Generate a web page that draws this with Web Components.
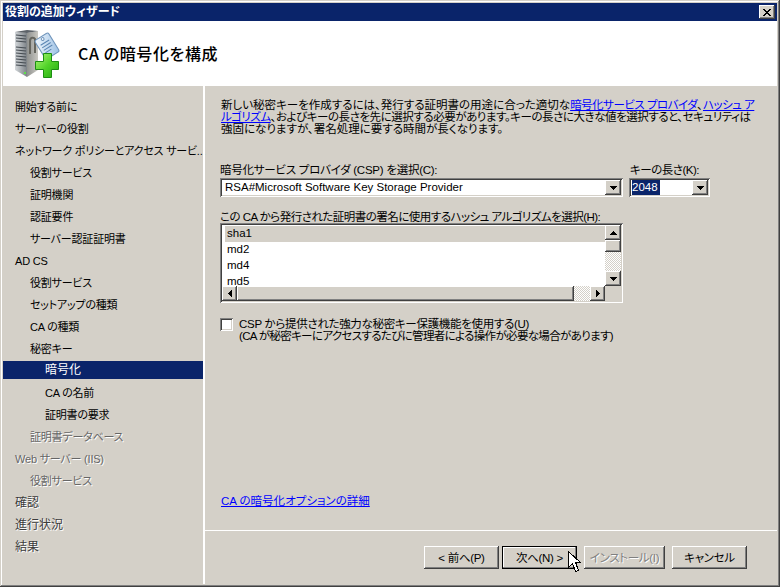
<!DOCTYPE html>
<html lang="ja">
<head>
<meta charset="utf-8">
<title>役割の追加ウィザード</title>
<style>
  html, body { margin: 0; padding: 0; background: #d4d0c8; }
  body { width: 780px; height: 587px; overflow: hidden; font: 11.5px/12px "Liberation Sans", "Noto Sans CJK JP", sans-serif; font-feature-settings: "palt"; color: #000; }
</style>
</head>
<body>
<wizard-window>
  <title-bar slot="title" text="役割の追加ウィザード"></title-bar>
  <wizard-header slot="header" text="CA の暗号化を構成"></wizard-header>
  <nav-list slot="nav">
    <nav-item>開始する前に</nav-item>
    <nav-item>サーバーの役割</nav-item>
    <nav-item>ネットワーク ポリシーとアクセス サービ...</nav-item>
    <nav-item level="1">役割サービス</nav-item>
    <nav-item level="1">証明機関</nav-item>
    <nav-item level="1">認証要件</nav-item>
    <nav-item level="1">サーバー認証証明書</nav-item>
    <nav-item>AD CS</nav-item>
    <nav-item level="1">役割サービス</nav-item>
    <nav-item level="1">セットアップの種類</nav-item>
    <nav-item level="1">CA の種類</nav-item>
    <nav-item level="1">秘密キー</nav-item>
    <nav-item level="2" selected>暗号化</nav-item>
    <nav-item level="2">CA の名前</nav-item>
    <nav-item level="2">証明書の要求</nav-item>
    <nav-item level="1" disabled>証明書データベース</nav-item>
    <nav-item disabled>Web サーバー (IIS)</nav-item>
    <nav-item level="1" disabled>役割サービス</nav-item>
    <nav-item disabled dark>確認</nav-item>
    <nav-item disabled dark>進行状況</nav-item>
    <nav-item disabled dark>結果</nav-item>
  </nav-list>
  <crypto-page slot="page"></crypto-page>
  <button-bar slot="buttons">
    <win-button>&lt; 前へ(P)</win-button>
    <win-button default>次へ(N) &gt;</win-button>
    <win-button disabled wide>インストール(I)</win-button>
    <win-button>キャンセル</win-button>
  </button-bar>
</wizard-window>

<script>
const raised = 'box-shadow: inset -1px -1px #404040, inset 1px 1px #fff, inset -2px -2px #808080;';
const sunken = 'box-shadow: inset 1px 1px #808080, inset -1px -1px #fff, inset 2px 2px #404040, inset -2px -2px #d4d0c8;';
const dither = 'background: conic-gradient(#fff 25%, #d4d0c8 0 50%, #fff 0 75%, #d4d0c8 0) 0 0 / 2px 2px;';

function arrow(dir) {
    const points = {
        up: '0,4 7,4 3.5,0',
        down: '0,0 7,0 3.5,4',
        left: '4,0 4,7 0,3.5',
        right: '0,0 0,7 4,3.5'
    };
    const vertical = dir === 'up' || dir === 'down';
    const w = vertical ? 7 : 4;
    const h = vertical ? 4 : 7;
    return `<svg width="${w}" height="${h}" viewBox="0 0 ${w} ${h}" shape-rendering="crispEdges"><polygon points="${points[dir]}" fill="#000"/></svg>`;
}

class WizardWindow extends HTMLElement {
    constructor() {
        super();
        this.attachShadow({ mode: 'open' });
        this.shadowRoot.innerHTML = `
            <style>
                :host { display: block; width: 780px; height: 587px; box-sizing: border-box; background: #d4d0c8; position: relative;
                    padding: 3px;
                    box-shadow: inset -1px -1px #404040, inset 1px 1px #d4d0c8, inset -2px -2px #808080, inset 2px 2px #fff; }
                .frame { display: grid; grid-template-columns: 200px minmax(0, 1fr); grid-template-rows: 18px 65px minmax(0, 1fr); height: 100%; }
                ::slotted([slot=title]), ::slotted([slot=header]) { grid-column: 1 / 3; }
                .right { display: flex; flex-direction: column; border-left: 2px solid #fff; min-height: 0; }
                .cursor { position: absolute; left: 568px; top: 551px; }
            </style>
            <div class="frame">
                <slot name="title"></slot>
                <slot name="header"></slot>
                <slot name="nav"></slot>
                <div class="right">
                    <slot name="page"></slot>
                    <slot name="buttons"></slot>
                </div>
            </div>
            <svg class="cursor" width="13" height="22" viewBox="0 0 13 22" shape-rendering="crispEdges">
                <path d="M0.5 0.5V16.5L4.5 12.5L7.5 20.5L10.5 19.5L7.5 11.5H12.5Z" fill="#fff" stroke="#000"/>
            </svg>`;
    }
}

class TitleBar extends HTMLElement {
    constructor() {
        super();
        this.attachShadow({ mode: 'open' });
        this.shadowRoot.innerHTML = `
            <style>
                :host { display: flex; align-items: center; justify-content: space-between; background: #0a246a; color: #fff; height: 18px; padding: 0 2px; font-size: 12px; font-weight: 700; }
                .close { width: 16px; height: 14px; background: #d4d0c8; ${raised} display: flex; align-items: center; justify-content: center; }
            </style>
            <span>${this.getAttribute('text')}</span>
            <div class="close">
                <svg width="8" height="7" viewBox="0 0 8 7" shape-rendering="crispEdges"><path d="M0 0h2v1h1v1h2v-1h1v-1h2v1h-1v1h-1v1h-1v1h1v1h1v1h1v1h-2v-1h-1v-1h-2v1h-1v1h-2v-1h1v-1h1v-1h1v-1h-1v-1h-1v-1h-1z" fill="#000"/></svg>
            </div>`;
    }
}

class WizardHeader extends HTMLElement {
    constructor() {
        super();
        this.attachShadow({ mode: 'open' });
        this.shadowRoot.innerHTML = `
            <style>
                :host { display: flex; align-items: center; gap: 17px; background: #fff; height: 65px; padding: 0 0 0 11px; }
                svg { margin-top: 1px; }
                h1 { margin: 0 0 2px; font-size: 16px; line-height: 20px; font-weight: 500; letter-spacing: 0.6px; font-family: "Noto Sans CJK JP", sans-serif; }
            </style>
            <svg width="47" height="50" viewBox="0 0 47 50">
                <defs>
                    <linearGradient id="front" x1="0" x2="1"><stop offset="0" stop-color="#d3d7da"/><stop offset="1" stop-color="#7c8287"/></linearGradient>
                    <linearGradient id="side" x1="0" x2="1"><stop offset="0" stop-color="#8f918f"/><stop offset="1" stop-color="#c9c8c2"/></linearGradient>
                    <linearGradient id="tag" x1="0" y1="0" x2="1" y2="1"><stop offset="0" stop-color="#f2f8fd"/><stop offset="1" stop-color="#9cc0e4"/></linearGradient>
                    <linearGradient id="plus" x1="0" y1="0" x2="1" y2="1"><stop offset="0" stop-color="#b4f57a"/><stop offset="0.5" stop-color="#52d42a"/><stop offset="1" stop-color="#22a810"/></linearGradient>
                </defs>
                <path d="M1 3L13 4V48L1 41Z" fill="url(#front)"/>
                <path d="M13 4L24 2V41L13 48Z" fill="url(#side)"/>
                <path d="M1 3L13 1L24 2L13 4Z" fill="#5c6268"/>
                <path d="M2 6L12 7M2 9L12 10M2 12L12 13M2 18L12 19M2 21L12 22M2 24L12 25M2 27L12 28M2 30L12 31M2 33L12 34M2 36L12 37" stroke="#454c52" stroke-width="1.2"/>
                <rect x="10" y="43" width="2" height="2" fill="#5ce04a"/>
                <path d="M16 25V12C16 8 20 8 21 10V24" fill="none" stroke="#66665f" stroke-width="2"/>
                <g transform="rotate(-32 33 17)">
                    <rect x="25" y="6" width="16" height="22" rx="2" fill="url(#tag)" stroke="#6f94bb"/>
                    <path d="M28 13H38M28 16H38M28 19H38M28 22H35" stroke="#5a85b2"/>
                    <circle cx="33" cy="8.8" r="1.4" fill="#fff" stroke="#6f94bb"/>
                </g>
                <path d="M29.5 24.5H37.5V32.5H44.5V40.5H37.5V48.5H29.5V40.5H21.5V32.5H29.5Z" fill="url(#plus)" stroke="#1c8f12"/>
            </svg>
            <h1>${this.getAttribute('text')}</h1>`;
    }
}

class NavList extends HTMLElement {
    constructor() {
        super();
        this.attachShadow({ mode: 'open' });
        this.shadowRoot.innerHTML = `
            <style>
                :host { display: flex; flex-direction: column; gap: 4px; padding-top: 11px; background: #d4d0c8; }
            </style>
            <slot></slot>`;
    }
}

class NavItem extends HTMLElement {
    constructor() {
        super();
        this.attachShadow({ mode: 'open' });
        this.shadowRoot.innerHTML = `
            <style>
                :host { display: block; height: 18px; line-height: 20px; padding-left: 12px; white-space: nowrap; font-size: 11px; letter-spacing: -0.2px; }
                :host([level="1"]) { padding-left: 27px; }
                :host([level="2"]) { padding-left: 42px; }
                :host([selected]) { background: #0a246a; color: #fff; font-size: 12px; letter-spacing: 0; line-height: 18px; }
                :host([disabled]) { color: #666; text-shadow: 1px 1px 0 #fff; }
                :host([dark]) { color: #3c3c3c; font-size: 12px; letter-spacing: 0; }
            </style>
            <slot></slot>`;
    }
}

class ComboBox extends HTMLElement {
    constructor() {
        super();
        this.attachShadow({ mode: 'open' });
        this.shadowRoot.innerHTML = `
            <style>
                :host { display: flex; align-items: center; justify-content: space-between; box-sizing: border-box; height: 19px; background: #fff; padding: 2px; ${sunken} }
                .value { padding-left: 3px; line-height: 15px; white-space: nowrap; }
                :host([highlight]) .value { background: #0a246a; color: #fff; padding: 0 2px 0 0; margin-left: 1px; }
                .btn { width: 16px; height: 15px; background: #d4d0c8; ${raised} display: flex; align-items: center; justify-content: center; }
            </style>
            <span class="value"><slot></slot></span>
            <span class="btn">${arrow('down')}</span>`;
    }
}

class ScrollBar extends HTMLElement {
    constructor() {
        super();
        this.attachShadow({ mode: 'open' });
        const vertical = this.getAttribute('orient') === 'v';
        this.shadowRoot.innerHTML = `
            <style>
                :host { display: flex; flex-direction: ${vertical ? 'column' : 'row'}; ${dither} }
                .btn { flex: none; width: ${vertical ? 16 : 15}px; height: 15px; background: #d4d0c8; ${raised} display: flex; align-items: center; justify-content: center; }
                .thumb { flex: none; background: #d4d0c8; ${raised} }
                .fill { flex: 1; }
                ${vertical ? '.thumb { height: 12px; width: 16px; }' : '.thumb { width: 337px; height: 15px; }'}
            </style>
            <span class="btn">${arrow(vertical ? 'up' : 'left')}</span>
            <span class="thumb"></span>
            <span class="fill"></span>
            <span class="btn">${arrow(vertical ? 'down' : 'right')}</span>`;
    }
}

class ListBox extends HTMLElement {
    constructor() {
        super();
        this.attachShadow({ mode: 'open' });
        this.shadowRoot.innerHTML = `
            <style>
                :host { display: grid; grid-template-columns: 383px 16px; grid-template-rows: 61px 15px; box-sizing: border-box; height: 80px; padding: 2px; background: #fff; ${sunken} }
                .rows { overflow: hidden; padding: 1px 0 0 3px; background: #fff; }
                .corner { background: #d4d0c8; }
            </style>
            <div class="rows"><slot></slot></div>
            <scroll-bar orient="v"></scroll-bar>
            <scroll-bar orient="h"></scroll-bar>
            <div class="corner"></div>`;
    }
}

class ListRow extends HTMLElement {
    constructor() {
        super();
        this.attachShadow({ mode: 'open' });
        this.shadowRoot.innerHTML = `
            <style>
                :host { display: block; height: 16px; line-height: 15px; padding-left: 2px; }
                :host([selected]) { background: #d4d0c8; }
            </style>
            <slot></slot>`;
    }
}

class CheckBox extends HTMLElement {
    constructor() {
        super();
        this.attachShadow({ mode: 'open' });
        this.shadowRoot.innerHTML = `
            <style>
                :host { display: flex; gap: 6px; align-items: flex-start; }
                .box { flex: none; width: 13px; height: 13px; box-sizing: border-box; background: #fff; ${sunken} }
                .label { line-height: 12px; white-space: nowrap; }
            </style>
            <span class="box"></span>
            <span class="label"><slot></slot></span>`;
    }
}

class WinButton extends HTMLElement {
    constructor() {
        super();
        this.attachShadow({ mode: 'open' });
        this.shadowRoot.innerHTML = `
            <style>
                :host { display: flex; align-items: center; justify-content: center; box-sizing: border-box; width: 75px; height: 23px; background: #d4d0c8; white-space: nowrap; letter-spacing: -0.3px; ${raised} }
                :host([wide]) { width: 81px; }
                :host([disabled]) { color: #808080; text-shadow: 1px 1px 0 #fff; }
                :host([default]) { box-shadow: inset 0 0 0 1px #000, inset -2px -2px #808080, inset 2px 2px #fff; }
            </style>
            <slot></slot>`;
    }
}

class ButtonBar extends HTMLElement {
    constructor() {
        super();
        this.attachShadow({ mode: 'open' });
        this.shadowRoot.innerHTML = `
            <style>
                :host { display: flex; flex: none; justify-content: flex-end; align-items: flex-start; box-sizing: border-box; height: 54px; padding: 15px 30px 0 0; border-top: 1px solid #fff; }
                ::slotted(win-button) { margin-left: 7px; }
                ::slotted(win-button[default]) { margin-left: 3px; }
            </style>
            <slot></slot>`;
    }
}

class CryptoPage extends HTMLElement {
    constructor() {
        super();
        this.attachShadow({ mode: 'open' });
        this.shadowRoot.innerHTML = `
            <style>
                :host { display: flex; flex: 1; flex-direction: column; padding: 13px 0 0 15px; min-height: 0; }
                a { color: #0000ff; text-decoration: underline; }
                p { margin: 0 0 0 1px; line-height: 12px; white-space: nowrap; }
                p a { letter-spacing: -0.5px; }
                .tight { letter-spacing: -0.45px; }
                .combos { display: grid; grid-template-columns: 403px 81px; column-gap: 6px; margin-top: 29px; }
                .combos label { display: block; line-height: 12px; margin-bottom: 2px; white-space: nowrap; }
                .csp { letter-spacing: -0.25px; }
                .key { letter-spacing: -0.5px; margin-left: 1px; }
                .hash { margin-top: 14px; width: 403px; }
                .hash label { display: block; line-height: 12px; white-space: nowrap; letter-spacing: -0.52px; }
                check-box { margin-top: 15px; }
                .more { margin-top: auto; margin-bottom: 23px; margin-left: 1px; }
            </style>
            <p>新しい秘密キーを作成するには、発行する証明書の用途に合った適切な<a href="#">暗号化サービス プロバイダ</a>、<a href="#">ハッシュ ア<br>ルゴリズム</a><span class="tight">、およびキーの長さを先に選択する必要があります。キーの長さに大きな値を選択すると、セキュリティは</span><br>強固になりますが、署名処理に要する時間が長くなります。</p>
            <div class="combos">
                <div>
                    <label class="csp">暗号化サービス プロバイダ (CSP) を選択(C):</label>
                    <combo-box>RSA#Microsoft Software Key Storage Provider</combo-box>
                </div>
                <div>
                    <label class="key">キーの長さ(K):</label>
                    <combo-box highlight>2048</combo-box>
                </div>
            </div>
            <div class="hash">
                <label>この CA から発行された証明書の署名に使用するハッシュ アルゴリズムを選択(H):</label>
                <list-box>
                    <list-row selected>sha1</list-row>
                    <list-row>md2</list-row>
                    <list-row>md4</list-row>
                    <list-row>md5</list-row>
                </list-box>
            </div>
            <check-box><span style="letter-spacing:-0.3px">CSP から提供された強力な秘密キー保護機能を使用する(U)</span><br><span style="letter-spacing:-0.65px">(CA が秘密キーにアクセスするたびに管理者による操作が必要な場合があります)</span></check-box>
            <a class="more" href="#">CA の暗号化オプションの詳細</a>`;
    }
}

customElements.define('title-bar', TitleBar);
customElements.define('wizard-header', WizardHeader);
customElements.define('nav-list', NavList);
customElements.define('nav-item', NavItem);
customElements.define('combo-box', ComboBox);
customElements.define('scroll-bar', ScrollBar);
customElements.define('list-box', ListBox);
customElements.define('list-row', ListRow);
customElements.define('check-box', CheckBox);
customElements.define('win-button', WinButton);
customElements.define('button-bar', ButtonBar);
customElements.define('crypto-page', CryptoPage);
customElements.define('wizard-window', WizardWindow);
</script>
</body>
</html>
